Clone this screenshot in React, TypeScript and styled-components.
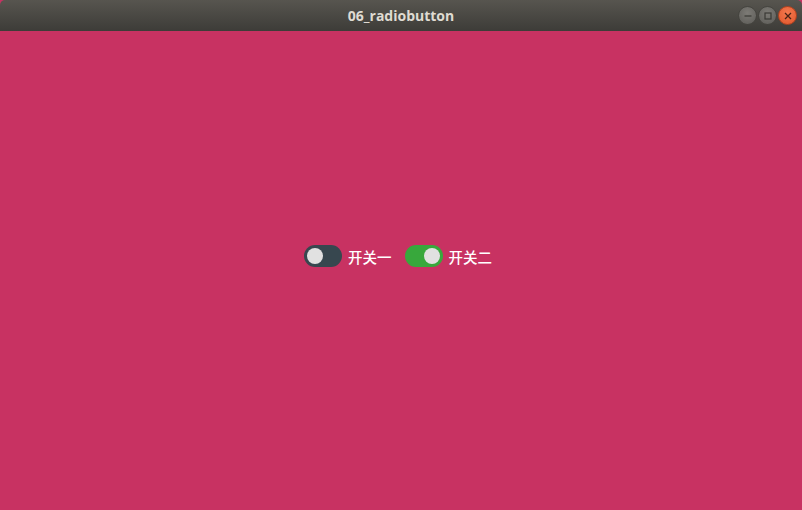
import React, { useState } from "react"
import styled, { createGlobalStyle } from "styled-components"

const GlobalStyle = createGlobalStyle`
  html, body {
    margin: 0;
    padding: 0;
    width: 802px;
    height: 510px;
    overflow: hidden;
  }
`

const Window = styled.div`
  width: 802px;
  height: 510px;
  display: flex;
  flex-direction: column;
  background: #c83262;
`

const TitleBar = styled.header`
  height: 31px;
  flex-shrink: 0;
  display: flex;
  align-items: center;
  justify-content: center;
  position: relative;
  background: linear-gradient(#57554f, #3d3c38);
  border-radius: 5px 5px 0 0;
  font: bold 14px "Open Sans", "DejaVu Sans", sans-serif;
  color: #dfdbd2;
`

const Controls = styled.div`
  position: absolute;
  right: 5px;
  top: 6px;
  display: flex;
  gap: 1px;
`

const WinButton = styled.div<{ $close?: boolean }>`
  width: 19px;
  height: 19px;
  border-radius: 50%;
  display: flex;
  align-items: center;
  justify-content: center;
  background: ${p => p.$close
    ? "radial-gradient(circle at 50% 35%, #f47a4f, #e0552b)"
    : "radial-gradient(circle at 50% 35%, #7d7b76, #5c5b57)"};
  border: 1px solid ${p => p.$close ? "#b5431f" : "#45443f"};
  box-sizing: border-box;
`

const Content = styled.main`
  flex: 1;
  display: flex;
  justify-content: center;
  align-items: flex-start;
  padding: 214px 6px 0 0;
`

const Row = styled.div`
  display: flex;
  align-items: center;
  gap: 13px;
`

const SwitchLabel = styled.label`
  display: flex;
  align-items: center;
  gap: 6px;
  cursor: pointer;
  color: #ffffff;
  font: 500 14.5px "Noto Sans CJK SC", "Noto Sans", sans-serif;
`

const Track = styled.span<{ $on: boolean }>`
  width: 38px;
  height: 22px;
  border-radius: 11px;
  box-sizing: border-box;
  padding: 3px;
  display: flex;
  justify-content: ${p => p.$on ? "flex-end" : "flex-start"};
  background: ${p => p.$on ? "#38a83c" : "#37474f"};
`

const Knob = styled.span`
  width: 16px;
  height: 16px;
  border-radius: 50%;
  background: #e1e1e1;
`

const Toggle: React.FC<{ label: string; initial: boolean }> = ({ label, initial }) => {
  const [on, setOn] = useState(initial)
  return <SwitchLabel onClick={() => setOn(!on)}>
    <Track $on={on}><Knob /></Track>
    {label}
  </SwitchLabel>
}

const App: React.FC = () => {
  return <Window>
    <GlobalStyle />
    <TitleBar>
      06_radiobutton
      <Controls>
        <WinButton>
          <svg width="8" height="8" viewBox="0 0 8 8"><path d="M0.5 4h7" stroke="#3a3935" strokeWidth="1.2" /></svg>
        </WinButton>
        <WinButton>
          <svg width="8" height="8" viewBox="0 0 8 8"><rect x="1" y="1" width="6" height="6" fill="none" stroke="#3a3935" strokeWidth="1.2" /></svg>
        </WinButton>
        <WinButton $close>
          <svg width="8" height="8" viewBox="0 0 8 8"><path d="M1 1l6 6M7 1l-6 6" stroke="#4a2214" strokeWidth="1.3" /></svg>
        </WinButton>
      </Controls>
    </TitleBar>
    <Content>
      <Row>
        <Toggle label="开关一" initial={false} />
        <Toggle label="开关二" initial={true} />
      </Row>
    </Content>
  </Window>
}

export default App
